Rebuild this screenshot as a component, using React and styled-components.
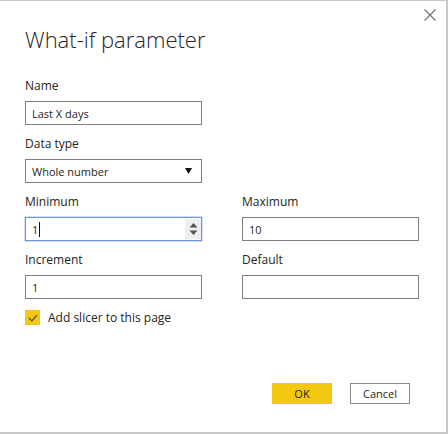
import React from 'react'
import styled, { createGlobalStyle } from 'styled-components'

const Global = createGlobalStyle`
  html, body {
    margin: 0;
    padding: 0;
    background: #fff;
  }
  body {
    font-family: "Open Sans", "Noto Sans", sans-serif;
    color: #252423;
  }
`

function App() {
  return (
    <>
      <Global />
      <Dialog>
        <Close aria-label="Close">
          <svg width="12" height="12" viewBox="0 0 12 12">
            <path d="M0.5 0.5 L11.5 11.5 M11.5 0.5 L0.5 11.5" stroke="#6e6e6e" strokeWidth="1.1" />
          </svg>
        </Close>
        <Title>What-if parameter</Title>

        <Field>
          <Label>Name</Label>
          <Input>Last X days</Input>
        </Field>

        <Field>
          <Label>Data type</Label>
          <Input>
            Whole number
            <Caret>
              <svg width="7" height="6" viewBox="0 0 7 6">
                <path d="M0 0 H7 L3.5 6 Z" fill="#111" />
              </svg>
            </Caret>
          </Input>
        </Field>

        <Grid>
          <Field>
            <Label>Minimum</Label>
            <Input $focused>
              1<Cursor />
              <Spinner>
                <svg width="9" height="14" viewBox="0 0 9 14">
                  <path d="M4.5 1 L8.5 5.5 H0.5 Z M4.5 13 L8.5 8.5 H0.5 Z" fill="#555" />
                </svg>
              </Spinner>
            </Input>
          </Field>
          <Field>
            <Label>Maximum</Label>
            <Input>10</Input>
          </Field>
          <Field>
            <Label>Increment</Label>
            <Input>1</Input>
          </Field>
          <Field>
            <Label>Default</Label>
            <Input></Input>
          </Field>
        </Grid>

        <CheckRow>
          <Check>
            <svg width="10" height="8" viewBox="0 0 10 8">
              <path d="M1 4 L3.8 6.8 L9 1.2" stroke="#4a4a3a" strokeWidth="1.2" fill="none" />
            </svg>
          </Check>
          Add slicer to this page
        </CheckRow>

        <Footer>
          <Button $primary>OK</Button>
          <Button>Cancel</Button>
        </Footer>
      </Dialog>
    </>
  )
}

const Dialog = styled.div`
  position: relative;
  box-sizing: border-box;
  width: 448px;
  height: 434px;
  border-top: 1px solid #c8c8c8;
  border-right: 2px solid #c8c8c8;
  border-bottom: 2px solid #c8c8c8;
  padding: 0 0 0 25px;
  display: flex;
  flex-direction: column;
`

const Close = styled.div`
  position: absolute;
  top: 8px;
  right: 10px;
  width: 12px;
  height: 12px;
  display: flex;
`

const Title = styled.h1`
  margin: 23px 0 24px;
  font-family: "Open Sans", sans-serif;
  font-weight: 300;
  font-size: 22px;
  line-height: 30px;
  color: #252423;
`

const Field = styled.div`
  display: flex;
  flex-direction: column;
  width: 177px;
  margin-bottom: 11px;
`

const Label = styled.div`
  font-size: 12px;
  line-height: 16px;
  color: #252423;
  margin-bottom: 7px;
`

const Input = styled.div`
  position: relative;
  box-sizing: border-box;
  height: 24px;
  border: 1px solid ${p => (p.$focused ? '#6d95d8' : '#808080')};
  ${p => p.$focused && 'box-shadow: 0 0 0 0.5px #a9c1ea;'}
  padding: 0 6px;
  display: flex;
  align-items: center;
  font-size: 11px;
  color: #252423;
`

const Caret = styled.span`
  margin-left: auto;
  margin-right: 3px;
  display: flex;
`

const Cursor = styled.span`
  width: 1px;
  height: 15px;
  background: #111;
  margin-left: 1px;
`

const Spinner = styled.span`
  position: absolute;
  right: 0;
  top: 1px;
  bottom: 1px;
  width: 16px;
  background: #efefef;
  display: flex;
  align-items: center;
  justify-content: center;
`

const Grid = styled.div`
  display: grid;
  grid-template-columns: 177px 176px;
  column-gap: 40px;
`

const CheckRow = styled.div`
  display: flex;
  align-items: center;
  gap: 8px;
  font-size: 12px;
  color: #252423;
  height: 15px;
`

const Check = styled.span`
  width: 15px;
  height: 15px;
  background: #f2c811;
  display: flex;
  align-items: center;
  justify-content: center;
`

const Footer = styled.div`
  margin-top: auto;
  margin-bottom: 28px;
  margin-right: 36px;
  display: flex;
  justify-content: flex-end;
  gap: 18px;
`

const Button = styled.div`
  box-sizing: border-box;
  width: 60px;
  height: 21px;
  display: flex;
  align-items: center;
  justify-content: center;
  font-size: 11px;
  color: #252423;
  background: ${p => (p.$primary ? '#f2c811' : '#fff')};
  border: 1px solid ${p => (p.$primary ? '#f2c811' : '#8a8a8a')};
`

export default App
